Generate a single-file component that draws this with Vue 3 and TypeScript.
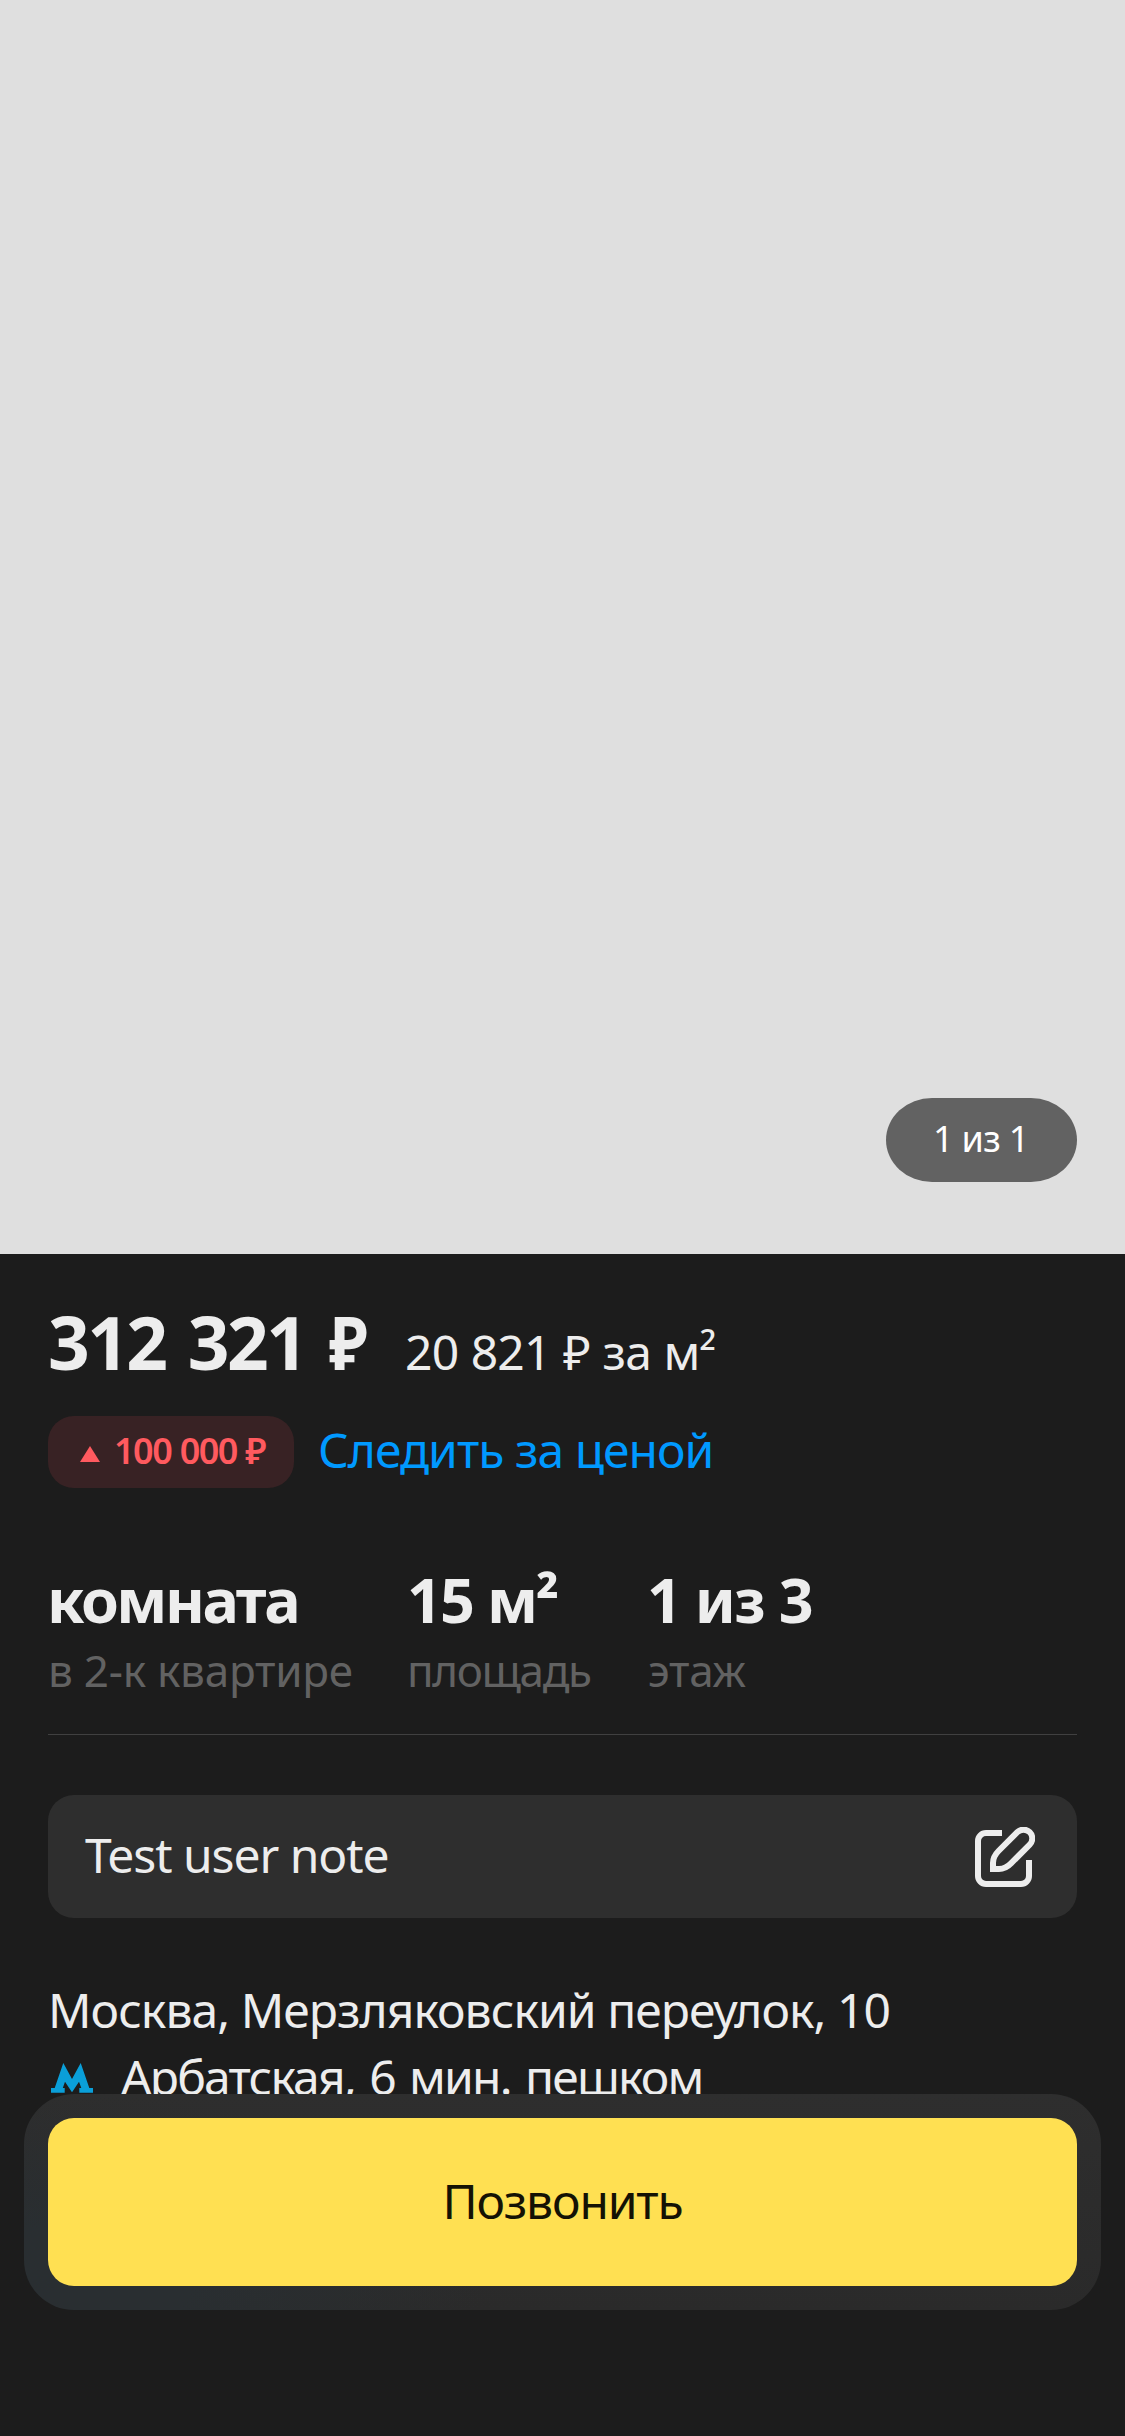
<script setup lang="ts">
interface Stat {
  value: string
  label: string
  kind: string
}

const stats: Stat[] = [
  { value: 'комната', label: 'в 2-к квартире', kind: 'rooms' },
  { value: '15 м²', label: 'площадь', kind: 'area' },
  { value: '1 из 3', label: 'этаж', kind: 'floor' },
]
</script>

<template>
  <main class="screen">
    <section class="photo">
      <span class="counter">1 из 1</span>
    </section>

    <section class="card">
      <div class="price-row">
        <h1 class="price">312 321 <span class="ruble">₽</span></h1>
        <span class="per-meter">20 821 ₽ за м²</span>
      </div>

      <div class="trend-row">
        <span class="trend">
          <svg class="trend-arrow" viewBox="0 0 20 16"><path d="M10 0 20 16H0Z" fill="currentColor" /></svg>
          <span class="trend-sum">100 000 ₽</span>
        </span>
        <a class="follow">Следить за ценой</a>
      </div>

      <div class="stats">
        <div v-for="s in stats" :key="s.kind" class="stat" :class="s.kind">
          <div class="value">{{ s.value }}</div>
          <div class="label">{{ s.label }}</div>
        </div>
      </div>

      <div class="note">
        <span class="note-text">Test user note</span>
        <svg class="edit" viewBox="0 0 60 60" fill="none" stroke="currentColor" stroke-width="6">
          <path d="M27 6H11a8 8 0 0 0-8 8V49a8 8 0 0 0 8 8H46a8 8 0 0 0 8-8V33" />
          <path d="M18 42V36c0-5 2-8.500 5.500-12L42.300 5.200a8.750 8.750 0 0 1 12.400 12.400L36 36.400C32.500 40 29 42 24 42Z" />
        </svg>
      </div>

      <div class="address">Москва, Мерзляковский переулок, 10</div>
      <div class="metro">
        <svg class="metro-icon" viewBox="0 0 42 30">
          <path d="M12.300 0 21 16 29.700 0 38.300 25H42V29.700H28.300V25H30.300L28 18.700 21 29.300 14 18.700 11.800 25H13.700V29.700H0V25H3.700Z" fill="#0a9fd9" />
        </svg>
        <span class="metro-text">Арбатская, 6 мин. пешком</span>
      </div>
    </section>

    <div class="call-bar">
      <button class="call" type="button">Позвонить</button>
    </div>
  </main>
</template>

<style>
body {
  background: #1c1c1c;
}
</style>

<style scoped>
.screen {
  position: relative;
  width: 1125px;
  height: 2436px;
  overflow: hidden;
  background: #1c1c1c;
  color: #ededed;
  font-family: "Noto Sans", "Open Sans", sans-serif;
  font-size: 48px;
  white-space: nowrap;
}
.photo {
  display: flex;
  align-items: flex-end;
  justify-content: flex-end;
  box-sizing: border-box;
  height: 1254px;
  padding: 0 48px 72px 0;
  background: #dfdfdf;
}
.counter {
  box-sizing: border-box;
  width: 191px;
  height: 84px;
  padding-left: 47px;
  border-radius: 46px / 42px;
  background: #626262;
  color: #fff;
  font-size: 36px;
  line-height: 82px;
  letter-spacing: -0.7px;
}
.card {
  padding: 43px 48px 0;
}
.price-row {
  display: flex;
  align-items: baseline;
  height: 90px;
}
.price {
  width: 357px;
  margin: 0;
  font-size: 73px;
  font-weight: 700;
  line-height: 90px;
  letter-spacing: -2.6px;
  word-spacing: 6px;
}
.ruble {
  display: inline-block;
  margin-left: -4px;
  transform: scaleX(0.88);
  transform-origin: right;
}
.per-meter {
  letter-spacing: -0.8px;
  word-spacing: 0.7px;
}
.trend-row {
  display: flex;
  margin-top: 29px;
  height: 72px;
}
.trend {
  display: flex;
  box-sizing: border-box;
  width: 246px;
  padding-left: 32px;
  border-radius: 26px;
  background: #382224;
  color: #ff5a5f;
}
.trend-arrow {
  width: 20px;
  height: 16px;
  margin: 30px 14px 0 0;
}
.trend-sum {
  font-size: 36px;
  font-weight: 600;
  line-height: 70px;
  letter-spacing: -1.5px;
  word-spacing: 0.5px;
}
.follow {
  margin-left: 24px;
  color: #0099ff;
  line-height: 68px;
  letter-spacing: -0.97px;
}
.stats {
  display: grid;
  grid-template-columns: 359px 240px 1fr;
  margin-top: 76px;
  padding-bottom: 34px;
  border-bottom: 1px solid #404040;
}
.value {
  font-size: 61px;
  font-weight: 700;
  line-height: 72px;
}
.label {
  margin-top: 4px;
  color: #626262;
  font-size: 44px;
  line-height: 60px;
}
.rooms .value {
  margin-left: -1px;
  letter-spacing: -2.45px;
}
.rooms .label {
  letter-spacing: -0.24px;
}
.area .value {
  letter-spacing: -1.9px;
}
.area .label {
  letter-spacing: -1.38px;
}
.floor .value {
  letter-spacing: -1.5px;
}
.floor .label {
  margin-left: 1px;
  letter-spacing: -0.3px;
}
.note {
  display: flex;
  align-items: flex-start;
  justify-content: space-between;
  box-sizing: border-box;
  height: 123px;
  margin-top: 60px;
  padding: 0 42px 0 37px;
  border-radius: 26px;
  background: #2e2e2e;
}
.note-text {
  line-height: 120px;
  letter-spacing: -1.06px;
}
.edit {
  width: 60px;
  height: 60px;
  margin-top: 32px;
}
.address {
  margin-top: 59px;
  line-height: 66px;
  letter-spacing: -0.95px;
}
.metro {
  display: flex;
  margin-top: 1px;
  line-height: 66px;
}
.metro-icon {
  width: 42px;
  height: 30px;
  margin: 19px 28px 0 3px;
}
.metro-text {
  letter-spacing: -1.8px;
  word-spacing: 3.5px;
}
.call-bar {
  position: absolute;
  top: 2094px;
  left: 24px;
  right: 24px;
  box-sizing: border-box;
  height: 216px;
  padding: 24px;
  border-radius: 50px;
  background:
    radial-gradient(ellipse 420px 190px at 40px 190px, #292e31 30%, rgba(41, 46, 49, 0) 100%),
    linear-gradient(#2e2e2e, #2a2a2a);
}
.call {
  display: block;
  width: 100%;
  height: 168px;
  padding: 0 0 2px;
  border: 0;
  border-radius: 26px;
  background: #ffe052;
  color: #141204;
  font: inherit;
  line-height: 166px;
  letter-spacing: -1.16px;
}
</style>
